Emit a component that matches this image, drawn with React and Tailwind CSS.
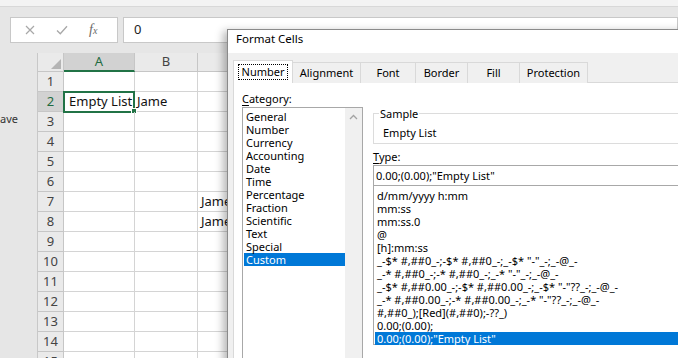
import React from "react";

const rowNums = [1, 2, 3, 4, 5, 6, 7, 8, 9, 10, 11, 12, 13, 14, 15];

const categories = [
  "General",
  "Number",
  "Currency",
  "Accounting",
  "Date",
  "Time",
  "Percentage",
  "Fraction",
  "Scientific",
  "Text",
  "Special",
  "Custom",
];

const formats = [
  "d/mm/yyyy h:mm",
  "mm:ss",
  "mm:ss.0",
  "@",
  "[h]:mm:ss",
  '_-$* #,##0_-;-$* #,##0_-;_-$* "-"_-;_-@_-',
  '_-* #,##0_-;-* #,##0_-;_-* "-"_-;_-@_-',
  '_-$* #,##0.00_-;-$* #,##0.00_-;_-$* "-"??_-;_-@_-',
  '_-* #,##0.00_-;-* #,##0.00_-;_-* "-"??_-;_-@_-',
  "#,##0_);[Red](#,##0);-??_)",
  "0.00;(0.00);",
  '0.00;(0.00);"Empty List"',
];

const tabs = [
  { label: "Number", w: "w-[60px]" },
  { label: "Alignment", w: "w-[69px]" },
  { label: "Font", w: "w-[56px]" },
  { label: "Border", w: "w-[53px]" },
  { label: "Fill", w: "w-[53px]" },
  { label: "Protection", w: "w-[69px]" },
];

function FormulaBar() {
  return (
    <div className="flex gap-[5px] pl-[10px] pt-[10px]">
      <div className="flex h-[26px] w-[108px] items-center border border-[#c8c8c8] bg-white">
        <svg width="10" height="10" viewBox="0 0 10 10" className="ml-[14px]">
          <path d="M1 1L9 9M9 1L1 9" stroke="#a8a8a8" strokeWidth="1.2" fill="none" />
        </svg>
        <svg width="12" height="10" viewBox="0 0 12 10" className="ml-[21px]">
          <path d="M1 5.5L4.3 8.8L11 1.2" stroke="#a8a8a8" strokeWidth="1.3" fill="none" />
        </svg>
        <span className="ml-[21px] font-['Liberation_Serif',serif] text-[14px] italic leading-none text-[#6a6a6a]">
          f<span className="text-[10px]">x</span>
        </span>
      </div>
      <div className="flex h-[26px] flex-1 items-center border border-[#c8c8c8] bg-white pl-[10px] text-[13px] text-[#222]">
        0
      </div>
    </div>
  );
}

function Sheet() {
  return (
    <div className="mt-[10px] flex">
      <div className="w-[37px] pt-[59px] text-[11px] text-[#333] leading-[14px]">ave</div>
      <div className="flex flex-1 flex-col border-l border-[#c8c8c8]">
        <div className="flex h-[19px] bg-[#eaeaea] text-[13px] text-[#444]">
          <div className="relative w-[26px] border-r border-b border-[#c6c6c6]">
            <svg width="10" height="10" viewBox="0 0 10 10" className="absolute right-[2px] bottom-[2px]">
              <path d="M10 0L10 10L0 10Z" fill="#b4b4b4" />
            </svg>
          </div>
          <div className="flex w-[71px] items-center justify-center border-r border-[#c6c6c6] border-b-2 border-b-[#217346] bg-[#d2d2d2] text-[#1f6b41]">
            A
          </div>
          <div className="flex w-[63px] items-center justify-center border-r border-b border-[#c6c6c6]">
            B
          </div>
          <div className="flex-1 border-b border-[#c6c6c6]" />
        </div>
        {rowNums.map((n) => (
          <div key={n} className="flex h-[20px] bg-white text-[13px] leading-[19px] text-[#111]">
            <div
              className={
                n === 2
                  ? "w-[26px] border-r border-b border-[#c6c6c6] bg-[#d2d2d2] text-center text-[#1f6b41]"
                  : "w-[26px] border-r border-b border-[#c6c6c6] bg-[#eaeaea] text-center text-[#444]"
              }
            >
              {n}
            </div>
            <div className="relative w-[71px] border-r border-b border-[#d4d4d4] pl-[5px]">
              {n === 2 && "Empty List"}
              {n === 2 && (
                <>
                  <div className="absolute -top-[1px] -left-[1px] h-[22px] w-[72px] border-2 border-[#217346]" />
                  <div className="absolute -right-[3px] -bottom-[3px] h-[6px] w-[6px] border border-white bg-[#217346]" />
                </>
              )}
            </div>
            <div className="w-[63px] border-r border-b border-[#d4d4d4] pl-[2px]">
              {n === 2 && "Jame"}
            </div>
            <div className="flex-1 border-b border-[#d4d4d4] pl-[3px]">
              {(n === 7 || n === 8) && "Jame"}
            </div>
          </div>
        ))}
      </div>
    </div>
  );
}

function FormatCells() {
  return (
    <div className="absolute top-[29px] left-[227px] h-[340px] w-[480px] border border-[#8a8a8a] bg-white text-[11px] text-black shadow-[-4px_2px_8px_rgba(0,0,0,0.28)]">
      <div className="h-[23px] pl-[8px] pt-[1px] leading-[16px] text-[11.5px]">Format Cells</div>
      <div className="h-full bg-[#f0f0f0] pt-[7px] pl-[5px]">
        <div className="flex h-[23px] items-end">
          {tabs.map((t, i) =>
            i === 0 ? (
              <div
                key={t.label}
                className={`${t.w} relative z-10 flex h-[23px] items-center justify-center border border-b-0 border-[#d9d9d9] bg-white`}
              >
                <span className="border border-dotted border-black px-[3px] leading-[14px]">{t.label}</span>
              </div>
            ) : (
              <div
                key={t.label}
                className={`${t.w} -ml-[1px] flex h-[21px] items-center justify-center border border-b-0 border-[#d9d9d9] bg-[#f0f0f0]`}
              >
                {t.label}
              </div>
            )
          )}
        </div>
        <div className="-mt-[1px] flex h-[300px] border border-[#d9d9d9] bg-white pt-[8px] pl-[8px]">
          <div className="flex w-[121px] flex-col">
            <div className="h-[16px] leading-[16px]">
              <span className="underline underline-offset-2">C</span>ategory:
            </div>
            <div className="flex flex-1 border border-[#a8a8a8]">
              <div className="flex-1 pt-[2px] pl-[1px]">
                {categories.map((c) => (
                  <div
                    key={c}
                    className={
                      c === "Custom"
                        ? "h-[13px] bg-[#0078d7] pl-[2px] leading-[13px] text-white"
                        : "h-[13px] pl-[2px] leading-[13px]"
                    }
                  >
                    {c}
                  </div>
                ))}
              </div>
              <div className="flex w-[17px] justify-center bg-[#f0f0f0] pt-[6px]">
                <svg width="9" height="6" viewBox="0 0 9 6">
                  <path d="M1 5L4.5 1.5L8 5" stroke="#a3a3a3" strokeWidth="1.3" fill="none" />
                </svg>
              </div>
            </div>
          </div>
          <div className="ml-[10px] flex w-[330px] flex-col pt-[15px]">
            <fieldset className="h-[38px] border border-[#dcdcdc] pl-[9px]">
              <legend className="-ml-[4px] px-[1px] leading-[15px]">Sample</legend>
              <div className="pt-[5px] leading-[14px]">Empty List</div>
            </fieldset>
            <div className="mt-[5px] h-[16px] leading-[16px]">
              <span className="underline underline-offset-2">T</span>ype:
            </div>
            <div className="h-[21px] border border-[#a8a8a8] pl-[2px] leading-[19px]">
              0.00;(0.00);"Empty List"
            </div>
            <div className="-mt-[1px] h-[160px] border border-[#a8a8a8] pt-[3px] pl-[1px]">
              {formats.map((f, i) => (
                <div
                  key={i}
                  className={
                    i === formats.length - 1
                      ? "h-[13px] whitespace-pre bg-[#0078d7] pl-[2px] leading-[13px] text-white"
                      : "h-[13px] whitespace-pre pl-[2px] leading-[13px]"
                  }
                >
                  {f}
                </div>
              ))}
            </div>
          </div>
        </div>
      </div>
    </div>
  );
}

export default function App() {
  return (
    <div className="relative h-[358px] w-[678px] overflow-hidden bg-[#e6e6e6] font-['Noto_Sans',sans-serif]">
      <div className="h-[7px] border-b border-[#d8d8d8] bg-[#f3f3f3]" />
      <FormulaBar />
      <Sheet />
      <FormatCells />
    </div>
  );
}
